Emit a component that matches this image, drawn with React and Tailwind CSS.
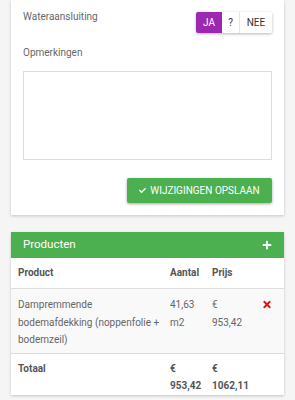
import React from "react";
import { FaCheck, FaPlus, FaTimes } from "react-icons/fa";

export default function App() {
  return (
    <div className="min-h-[400px] bg-[#f5f5f5] px-[11px] text-[10px] text-[#666] font-['Roboto',sans-serif]">
      {/* Card 1 */}
      <div className="bg-white shadow-[0_1px_3px_rgba(0,0,0,0.2)] px-[12px] pt-[10px] pb-[12px]">
        <div className="flex justify-between items-start">
          <div className="leading-[14px]">Wateraansluiting</div>
          <div className="mt-[2px] flex h-[21px] rounded-[2px] shadow-[0_1px_3px_rgba(0,0,0,0.3)] overflow-hidden text-[10px] leading-[21px]">
            <div className="w-[26px] bg-[#9c27b0] text-white text-center">JA</div>
            <div className="w-[18px] bg-white text-[#333] text-center border-r border-[#e5e5e5]">?</div>
            <div className="w-[32px] bg-white text-[#333] text-center">NEE</div>
          </div>
        </div>
        <div className="mt-[13px] leading-[14px]">Opmerkingen</div>
        <div className="mt-[11px] h-[89px] border border-[#ddd] bg-white"></div>
        <div className="mt-[18px] flex justify-end">
          <div className="flex items-center gap-[4px] h-[25px] w-[145px] justify-center bg-[#4caf50] text-white text-[10px] rounded-[2px] shadow-[0_1px_3px_rgba(0,0,0,0.35)]">
            <FaCheck className="w-[7px] h-[7px]" />
            <span>WIJZIGINGEN OPSLAAN</span>
          </div>
        </div>
      </div>

      {/* Card 2 */}
      <div className="mt-[17px] bg-white shadow-[0_1px_3px_rgba(0,0,0,0.2)] rounded-t-[2px]">
        <div className="h-[26px] bg-[#4caf50] flex items-center justify-between pl-[12px] pr-[12px] text-white">
          <span className="text-[11.5px]">Producten</span>
          <FaPlus className="w-[10px] h-[10px]" />
        </div>
        <div className="grid grid-cols-[152px_42px_45px_1fr] leading-[17.5px]">
          <div className="pl-[7px] pt-[6px] pb-[6.5px] font-bold text-[#555] border-b border-[#ddd]">Product</div>
          <div className="pl-[7px] pt-[6px] font-bold text-[#555] border-b border-[#ddd]">Aantal</div>
          <div className="pl-[7px] pt-[6px] font-bold text-[#555] border-b border-[#ddd]">Prijs</div>
          <div className="border-b border-[#ddd]"></div>

          <div className="pl-[7px] pt-[7px] pb-[4px] bg-[#f9f9f9] border-b border-[#ddd]">Dampremmende bodemafdekking (noppenfolie + bodemzeil)</div>
          <div className="pl-[7px] pt-[7px] bg-[#f9f9f9] border-b border-[#ddd]">41,63<br />m2</div>
          <div className="pl-[7px] pt-[7px] bg-[#f9f9f9] border-b border-[#ddd]">€<br />953,42</div>
          <div className="pt-[10px] pl-[12px] bg-[#f9f9f9] border-b border-[#ddd]">
            <FaTimes className="w-[10px] h-[11px] text-[#e01010]" />
          </div>

          <div className="pl-[7px] pt-[6px] pb-[8px] font-bold text-[#555]">Totaal</div>
          <div className="pl-[7px] pt-[6px] font-bold text-[#555]">€<br />953,42</div>
          <div className="pl-[7px] pt-[6px] font-bold text-[#555]">€<br />1062,11</div>
          <div></div>
        </div>
      </div>
    </div>
  );
}
